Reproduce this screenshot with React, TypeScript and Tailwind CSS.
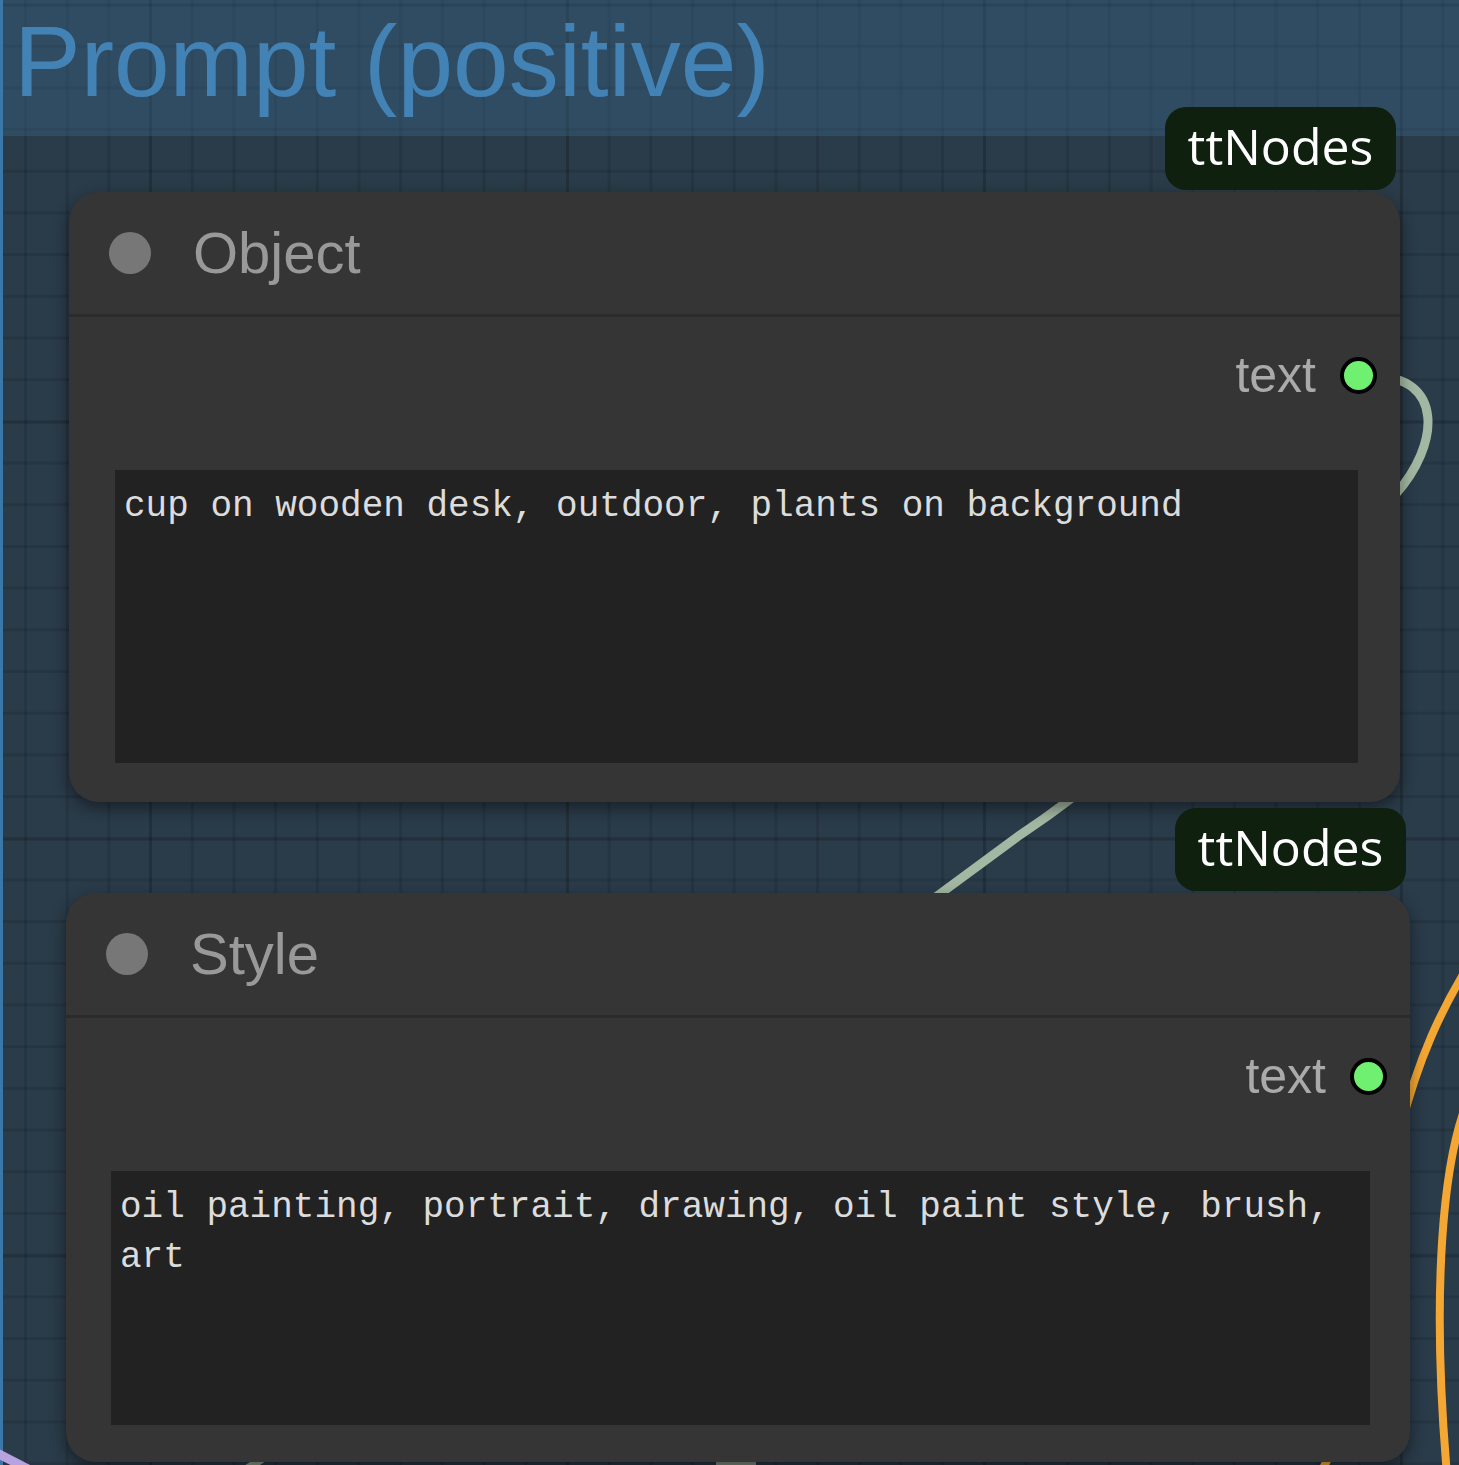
import React from "react";

interface NodeProps {
  title: string;
  text: string;
  className: string;
  areaClass: string;
}

const Node: React.FC<NodeProps> = ({ title, text, className, areaClass }) => {
  return (
    <div
      className={`absolute flex flex-col rounded-[30px] bg-[#353535] shadow-[0_6px_16px_rgba(0,0,0,0.45)] font-['Liberation_Sans',Arial,sans-serif] ${className}`}
    >
      {/* source badge */}
      <div className="absolute right-[4px] bottom-[calc(100%+2px)] flex h-[83px] w-[231px] items-center justify-center rounded-[21px] bg-[#0f200f] pb-[6px] font-['Open_Sans',sans-serif] text-[50px] leading-none text-white">
        ttNodes
      </div>

      <div className="flex h-[125px] items-center border-b-[3px] border-[#2b2b2b] pl-[40px]">
        <span className="h-[42px] w-[42px] rounded-full bg-[#777777]" />
        <span className="ml-[42px] text-[58px] leading-none text-[#999999]">{title}</span>
      </div>

      <div className="flex h-[116px] items-center justify-end gap-[24px] pr-[23px]">
        <span className="text-[50px] leading-none text-[#aaaaaa]">text</span>
        <span className="h-[37px] w-[37px] rounded-full border-[4px] border-black bg-[#70f070]" />
      </div>

      <div
        className={`mt-[37px] bg-[#222222] pl-[9px] pr-[8px] pt-[12px] font-['Liberation_Mono',monospace] text-[36px] leading-[50px] whitespace-pre-wrap break-words text-[#dcdcdc] ${areaClass}`}
      >
        {text}
      </div>
    </div>
  );
};

export default function App() {
  return (
    <div className="relative h-[1465px] w-[1459px] overflow-hidden bg-[#2a3b49] [background-image:linear-gradient(to_right,rgba(0,0,0,0.1)_3px,transparent_3px),linear-gradient(to_bottom,rgba(0,0,0,0.1)_3px,transparent_3px),linear-gradient(to_right,rgba(0,0,0,0.11)_3px,transparent_3px),linear-gradient(to_bottom,rgba(0,0,0,0.11)_3px,transparent_3px)] [background-size:417px_417px,417px_417px,41.7px_41.7px,41.7px_41.7px] [background-position:149px_0,0_838px,24px_0,0_3px]">
      {/* group */}
      <div className="h-full border-l-[3px] border-[#3b78aa]">
        <div className="h-[136px] bg-[rgba(63,117,160,0.3)] pl-[11px] pt-[11px] font-['Liberation_Sans',Arial,sans-serif] text-[100px] leading-none text-[#4382b4]">
          Prompt (positive)
        </div>
      </div>

      {/* links */}
      <svg className="pointer-events-none absolute inset-0 h-full w-full" viewBox="0 0 1459 1465">
        <path
          d="M1372 376 C1445 376 1440 445 1395 495 L1130 750 Q1080 795 1020 835 L800 997"
          fill="none"
          stroke="#a3b8a2"
          strokeWidth="9"
          strokeLinecap="round"
        />
        <path d="M1400 1130 C1418 1060 1440 1010 1475 955" fill="none" stroke="#f5a733" strokeWidth="8" />
        <path d="M1475 1085 C1440 1150 1432 1300 1447 1475" fill="none" stroke="#f5a733" strokeWidth="8" />
        <path d="M1322 1470 L1330 1455" fill="none" stroke="#f5a733" strokeWidth="8" />
        <path d="M245 1470 L268 1455" fill="none" stroke="#8a9a8a" strokeWidth="8" />
        <path d="M716 1462 L756 1462" fill="none" stroke="#7d8c7d" strokeWidth="8" />
        <path d="M-5 1452 L30 1470" fill="none" stroke="#b8a2e0" strokeWidth="9" />
      </svg>

      <Node
        title="Object"
        text="cup on wooden desk, outdoor, plants on background"
        className="left-[69px] top-[192px] h-[610px] w-[1331px]"
        areaClass="ml-[46px] mr-[42px] h-[293px]"
      />
      <Node
        title="Style"
        text="oil painting, portrait, drawing, oil paint style, brush, art"
        className="left-[66px] top-[893px] h-[569px] w-[1344px]"
        areaClass="ml-[45px] mr-[40px] h-[254px]"
      />
    </div>
  );
}
